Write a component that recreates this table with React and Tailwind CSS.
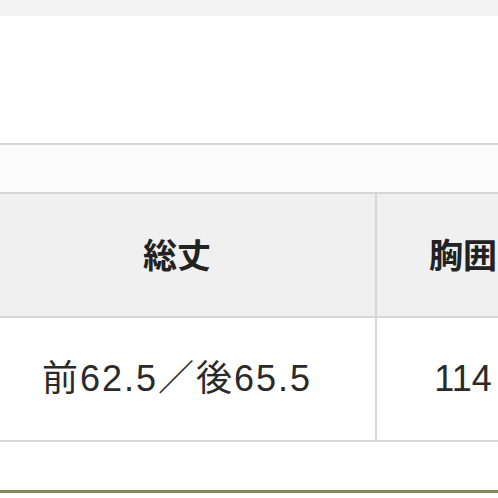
export default function App() {
  const font = { fontFamily: '"Noto Sans CJK JP", "Noto Sans", sans-serif' }
  const body = { fontFamily: '"Liberation Sans", "Noto Sans CJK JP", sans-serif' }
  return (
    <div className="w-[498px] h-[498px] overflow-hidden bg-white" style={font}>
      <div className="h-[16px] bg-[#f3f3f3]" />
      <div className="h-[127px] bg-white" />
      <div className="h-[2px] bg-[#d6d6d6]" />
      <div className="h-[47px] bg-[#fcfcfc]" />
      <div className="-ml-[23px] w-[600px]">
        <table className="border-collapse">
          <tbody>
            <tr className="bg-[#f0f0f0]">
              <th className="w-[398px] h-[124px] pb-[4px] border-2 border-[#d6d6d6] text-[34px] font-bold text-[#222] text-center align-middle">
                総丈
              </th>
              <th className="w-[174px] h-[124px] pb-[4px] border-2 border-[#d6d6d6] text-[34px] font-bold text-[#222] text-center align-middle">
                胸囲
              </th>
            </tr>
            <tr className="bg-white">
              <td className="h-[124px] border-2 border-[#d6d6d6] text-[36px] text-[#2a2a2a] text-center align-middle tracking-[2px]" style={body}>
                前62.5／後65.5
              </td>
              <td className="h-[124px] border-2 border-[#d6d6d6] text-[36px] text-[#2a2a2a] text-center align-middle" style={body}>
                114
              </td>
            </tr>
          </tbody>
        </table>
      </div>
      <div className="h-[48px] bg-white" />
      <div className="h-[3px] bg-[#7f8b5c]" />
      <div className="h-[10px] bg-white" />
    </div>
  )
}
